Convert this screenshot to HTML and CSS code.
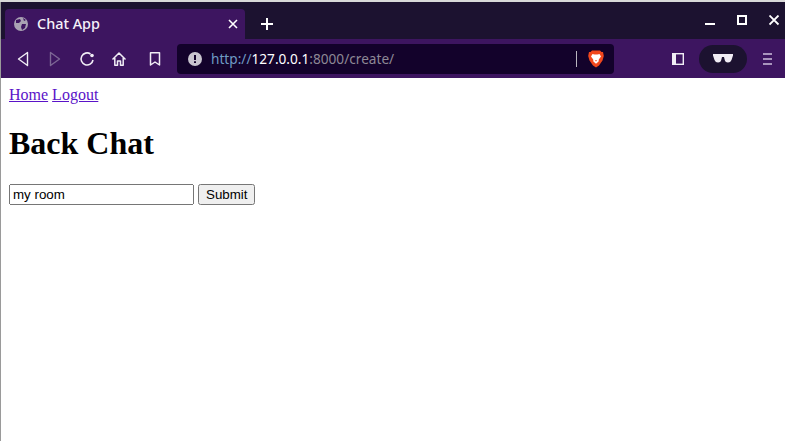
FILE: index.html
```html
<!DOCTYPE html>
<html lang="en">
<head>
    <meta charset="UTF-8">
    <title>Chat App</title>
    <link rel="stylesheet" href="styles.css">
</head>
<body>
    <div class="window">
        <!-- tab strip -->
        <div class="tabbar">
            <div class="tab">
                <svg class="globe" width="16" height="16" viewBox="0 0 16 16">
                    <circle cx="8" cy="8" r="7" fill="#a9a2b3"/>
                    <path d="M3 4 L7 3 L8 5 L6 7 L3 7 Z M9 8 L13 8 L12 12 L9 14 L8 11 Z M10 2 L13 4 L11 5 Z" fill="#3d1560"/>
                </svg>
                <span class="tab-title">Chat App</span>
                <svg class="tab-close" width="10" height="10" viewBox="0 0 10 10">
                    <path d="M1 1 L9 9 M9 1 L1 9" stroke="#fff" stroke-width="1.6"/>
                </svg>
            </div>
            <svg class="newtab" width="14" height="14" viewBox="0 0 14 14">
                <path d="M7 1 V13 M1 7 H13" stroke="#fff" stroke-width="2"/>
            </svg>
            <div class="winctl">
                <svg width="11" height="11" viewBox="0 0 11 11"><path d="M0 9 H10" stroke="#fff" stroke-width="2"/></svg>
                <svg width="11" height="11" viewBox="0 0 11 11"><rect x="1" y="1" width="8" height="8" fill="none" stroke="#fff" stroke-width="2"/></svg>
                <svg width="11" height="11" viewBox="0 0 11 11"><path d="M0.5 0.5 L9.5 9.5 M9.5 0.5 L0.5 9.5" stroke="#fff" stroke-width="1.8"/></svg>
            </div>
        </div>

        <!-- toolbar -->
        <div class="toolbar">
            <div class="navbtns">
                <svg width="16" height="16" viewBox="0 0 16 16"><path d="M12.5 1.5 L3.5 8 L12.5 14.5 Z" fill="none" stroke="#f1edf5" stroke-width="1.4" stroke-linejoin="round"/></svg>
                <svg width="16" height="16" viewBox="0 0 16 16"><path d="M3.5 1.5 L12.5 8 L3.5 14.5 Z" fill="none" stroke="#7d6795" stroke-width="1.4" stroke-linejoin="round"/></svg>
                <svg width="16" height="16" viewBox="0 0 16 16"><path d="M14 9 A6 6 0 1 1 11.5 3" fill="none" stroke="#f1edf5" stroke-width="1.6"/><circle cx="13" cy="4.5" r="1.8" fill="#f1edf5"/></svg>
                <svg width="16" height="16" viewBox="0 0 16 16"><path d="M1.5 8.5 L8 2 L14.5 8.5 M3.8 7 V14.2 H6.5 V10 H9.5 V14.2 H12.2 V7" fill="none" stroke="#f1edf5" stroke-width="1.5" stroke-linejoin="round"/></svg>
                <svg class="bookmark" width="16" height="16" viewBox="0 0 16 16"><path d="M3.5 1.8 H12.5 V14 L8 11 L3.5 14 Z" fill="none" stroke="#f1edf5" stroke-width="1.5" stroke-linejoin="round"/></svg>
            </div>
            <div class="urlbar">
                <svg class="info" width="14" height="14" viewBox="0 0 14 14">
                    <circle cx="7" cy="7" r="7" fill="#c9c5cf"/>
                    <path d="M7 3 V8" stroke="#13022b" stroke-width="2"/>
                    <path d="M7 9.3 V11" stroke="#13022b" stroke-width="2"/>
                </svg>
                <span class="url"><span class="url-scheme">http://</span><span class="url-host">127.0.0.1</span>:8000/create/</span>
                <span class="url-sep"></span>
                <svg class="lion" width="16" height="18" viewBox="0 0 16 18">
                    <path d="M4 0.5 H12 L13.5 2 L15 2 L15.8 6 L14.5 10.5 L11 15.5 L8 17.5 L5 15.5 L1.5 10.5 L0.2 6 L1 2 L2.5 2 Z" fill="#f1471d"/>
                    <path d="M4.5 4 L6.5 4.6 H9.5 L11.5 4 L13 6.5 L10.8 9.5 L10.6 11.5 L8 13.8 L5.4 11.5 L5.2 9.5 L3 6.5 Z" fill="#fff"/>
                    <path d="M6.8 10.3 H9.2 L8 11.6 Z" fill="#f1471d"/>
                </svg>
            </div>
            <svg class="sidebar-ic" width="14" height="14" viewBox="0 0 14 14">
                <rect x="1.7" y="1.7" width="10.6" height="10.6" fill="none" stroke="#f1edf5" stroke-width="1.4"/>
                <rect x="1.5" y="2" width="3.5" height="10" fill="#f1edf5"/>
            </svg>
            <div class="vpn">
                <svg width="20" height="9" viewBox="0 0 20 9">
                    <path d="M0 0 H20 V1.5 L18.5 6 Q17.5 8.5 15 8.5 Q12 8.5 11.5 5 L11 3 H9 L8.5 5 Q8 8.5 5 8.5 Q2.5 8.5 1.5 6 L0 1.5 Z" fill="#f1edf5"/>
                </svg>
            </div>
            <svg class="menu-ic" width="11" height="12" viewBox="0 0 11 12">
                <path d="M1 1 H10 M1 6 H10 M1 11 H10" stroke="#cdbfdb" stroke-width="1.5"/>
            </svg>
        </div>

        <!-- page -->
        <div class="page">
            <div><a href="#">Home</a> <a href="#">Logout</a></div>
            <h1>Back Chat</h1>
            <form>
                <input type="text" value="my room">
                <input type="submit" value="Submit">
            </form>
        </div>
    </div>
</body>
</html>
```

FILE: styles.css
```css
html, body {
    margin: 0;
    height: 100%;
    overflow: hidden;
}

.window {
    height: 100%;
    box-sizing: border-box;
    display: flex;
    flex-direction: column;
    border-top: 2px solid #d9d9d9;
    background: #fff;
}

/* tab strip */
.tabbar {
    height: 37px;
    flex: none;
    display: flex;
    align-items: flex-end;
    background: #1c1230;
    padding-left: 5px;
    border-left: 1px solid #9a9a9a;
    box-sizing: border-box;
}

.tab {
    width: 240px;
    height: 30px;
    box-sizing: border-box;
    margin-left: -1px;
    padding: 0 7px 0 8px;
    display: flex;
    align-items: center;
    background: #3d1560;
    border-radius: 4px 4px 0 0;
}

.tab-title {
    margin-left: 8px;
    padding-bottom: 2px;
    flex: 1;
    color: #f6f2fa;
    font: 500 14.4px "Noto Sans", sans-serif;
}

.newtab {
    margin: 0 0 8px 15px;
}

.winctl {
    margin: 0 5px 13px auto;
    display: flex;
    gap: 21px;
}

/* toolbar */
.toolbar {
    height: 39px;
    flex: none;
    display: flex;
    align-items: center;
    background: #3d1560;
    border-left: 1px solid #9a9a9a;
    box-sizing: border-box;
}

.navbtns {
    width: 176px;
    padding-left: 14px;
    box-sizing: border-box;
    display: flex;
    gap: 16px;
}

.navbtns .bookmark {
    margin-left: 4px;
}

.urlbar {
    width: 437px;
    height: 30px;
    box-sizing: border-box;
    padding: 0 10px 0 11px;
    display: flex;
    align-items: center;
    background: #13022b;
    border-radius: 4px;
}

.url {
    margin-left: 9px;
    flex: 1;
    color: #8d8895;
    font: 13.65px "Noto Sans", sans-serif;
}

.url-scheme {
    color: #6f9bc4;
}

.url-host {
    color: #fff;
}

.url-sep {
    width: 1px;
    height: 16px;
    background: #b9b5bf;
    margin-right: 11px;
}

.sidebar-ic {
    margin-left: 57px;
}

.vpn {
    width: 48px;
    height: 28px;
    margin-left: 14px;
    display: flex;
    align-items: center;
    justify-content: center;
    background: #1c1230;
    border-radius: 14px;
}

.menu-ic {
    margin-left: 15px;
}

/* page */
.page {
    flex: 1;
    padding: 8px;
    border-left: 1px solid #9a9a9a;
    font: 16px "Liberation Serif", serif;
    color: #000;
}

.page a {
    color: #5a13c8;
}

.page h1 {
    margin: 21.44px 0;
    font-size: 32px;
    font-weight: bold;
}

.page input {
    font: 13.33px "Liberation Sans", sans-serif;
}
```
